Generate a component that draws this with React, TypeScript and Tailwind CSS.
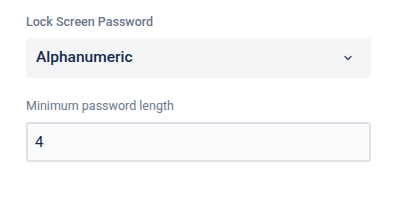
import { ChevronDown } from "lucide-react";

export default function App() {
  return (
    <div className="h-[210px] w-[400px] bg-white pl-[26px] pr-[29px] pt-[14px] font-['Roboto',sans-serif]">
      <label className="block text-[12.5px] font-medium leading-[16px] text-[#6b778c]">
        Lock Screen Password
      </label>
      <div className="mt-[8px] flex h-[40px] items-center justify-between rounded-[3px] bg-[#f4f5f7] pl-[10px] pr-[17px]">
        <span className="text-[15.5px] font-medium text-[#172b4d]">Alphanumeric</span>
        <ChevronDown className="h-[12px] w-[12px] text-[#42526e]" strokeWidth={3} />
      </div>

      <label className="mt-[20px] block text-[12.5px] leading-[16px] text-[#6b778c]">
        Minimum password length
      </label>
      <div className="mt-[8px] flex h-[40px] items-center rounded-[3px] border-2 border-[#dfe1e6] bg-[#fafbfc] px-[7px]">
        <span className="text-[15px] text-[#172b4d]">4</span>
      </div>
    </div>
  );
}
